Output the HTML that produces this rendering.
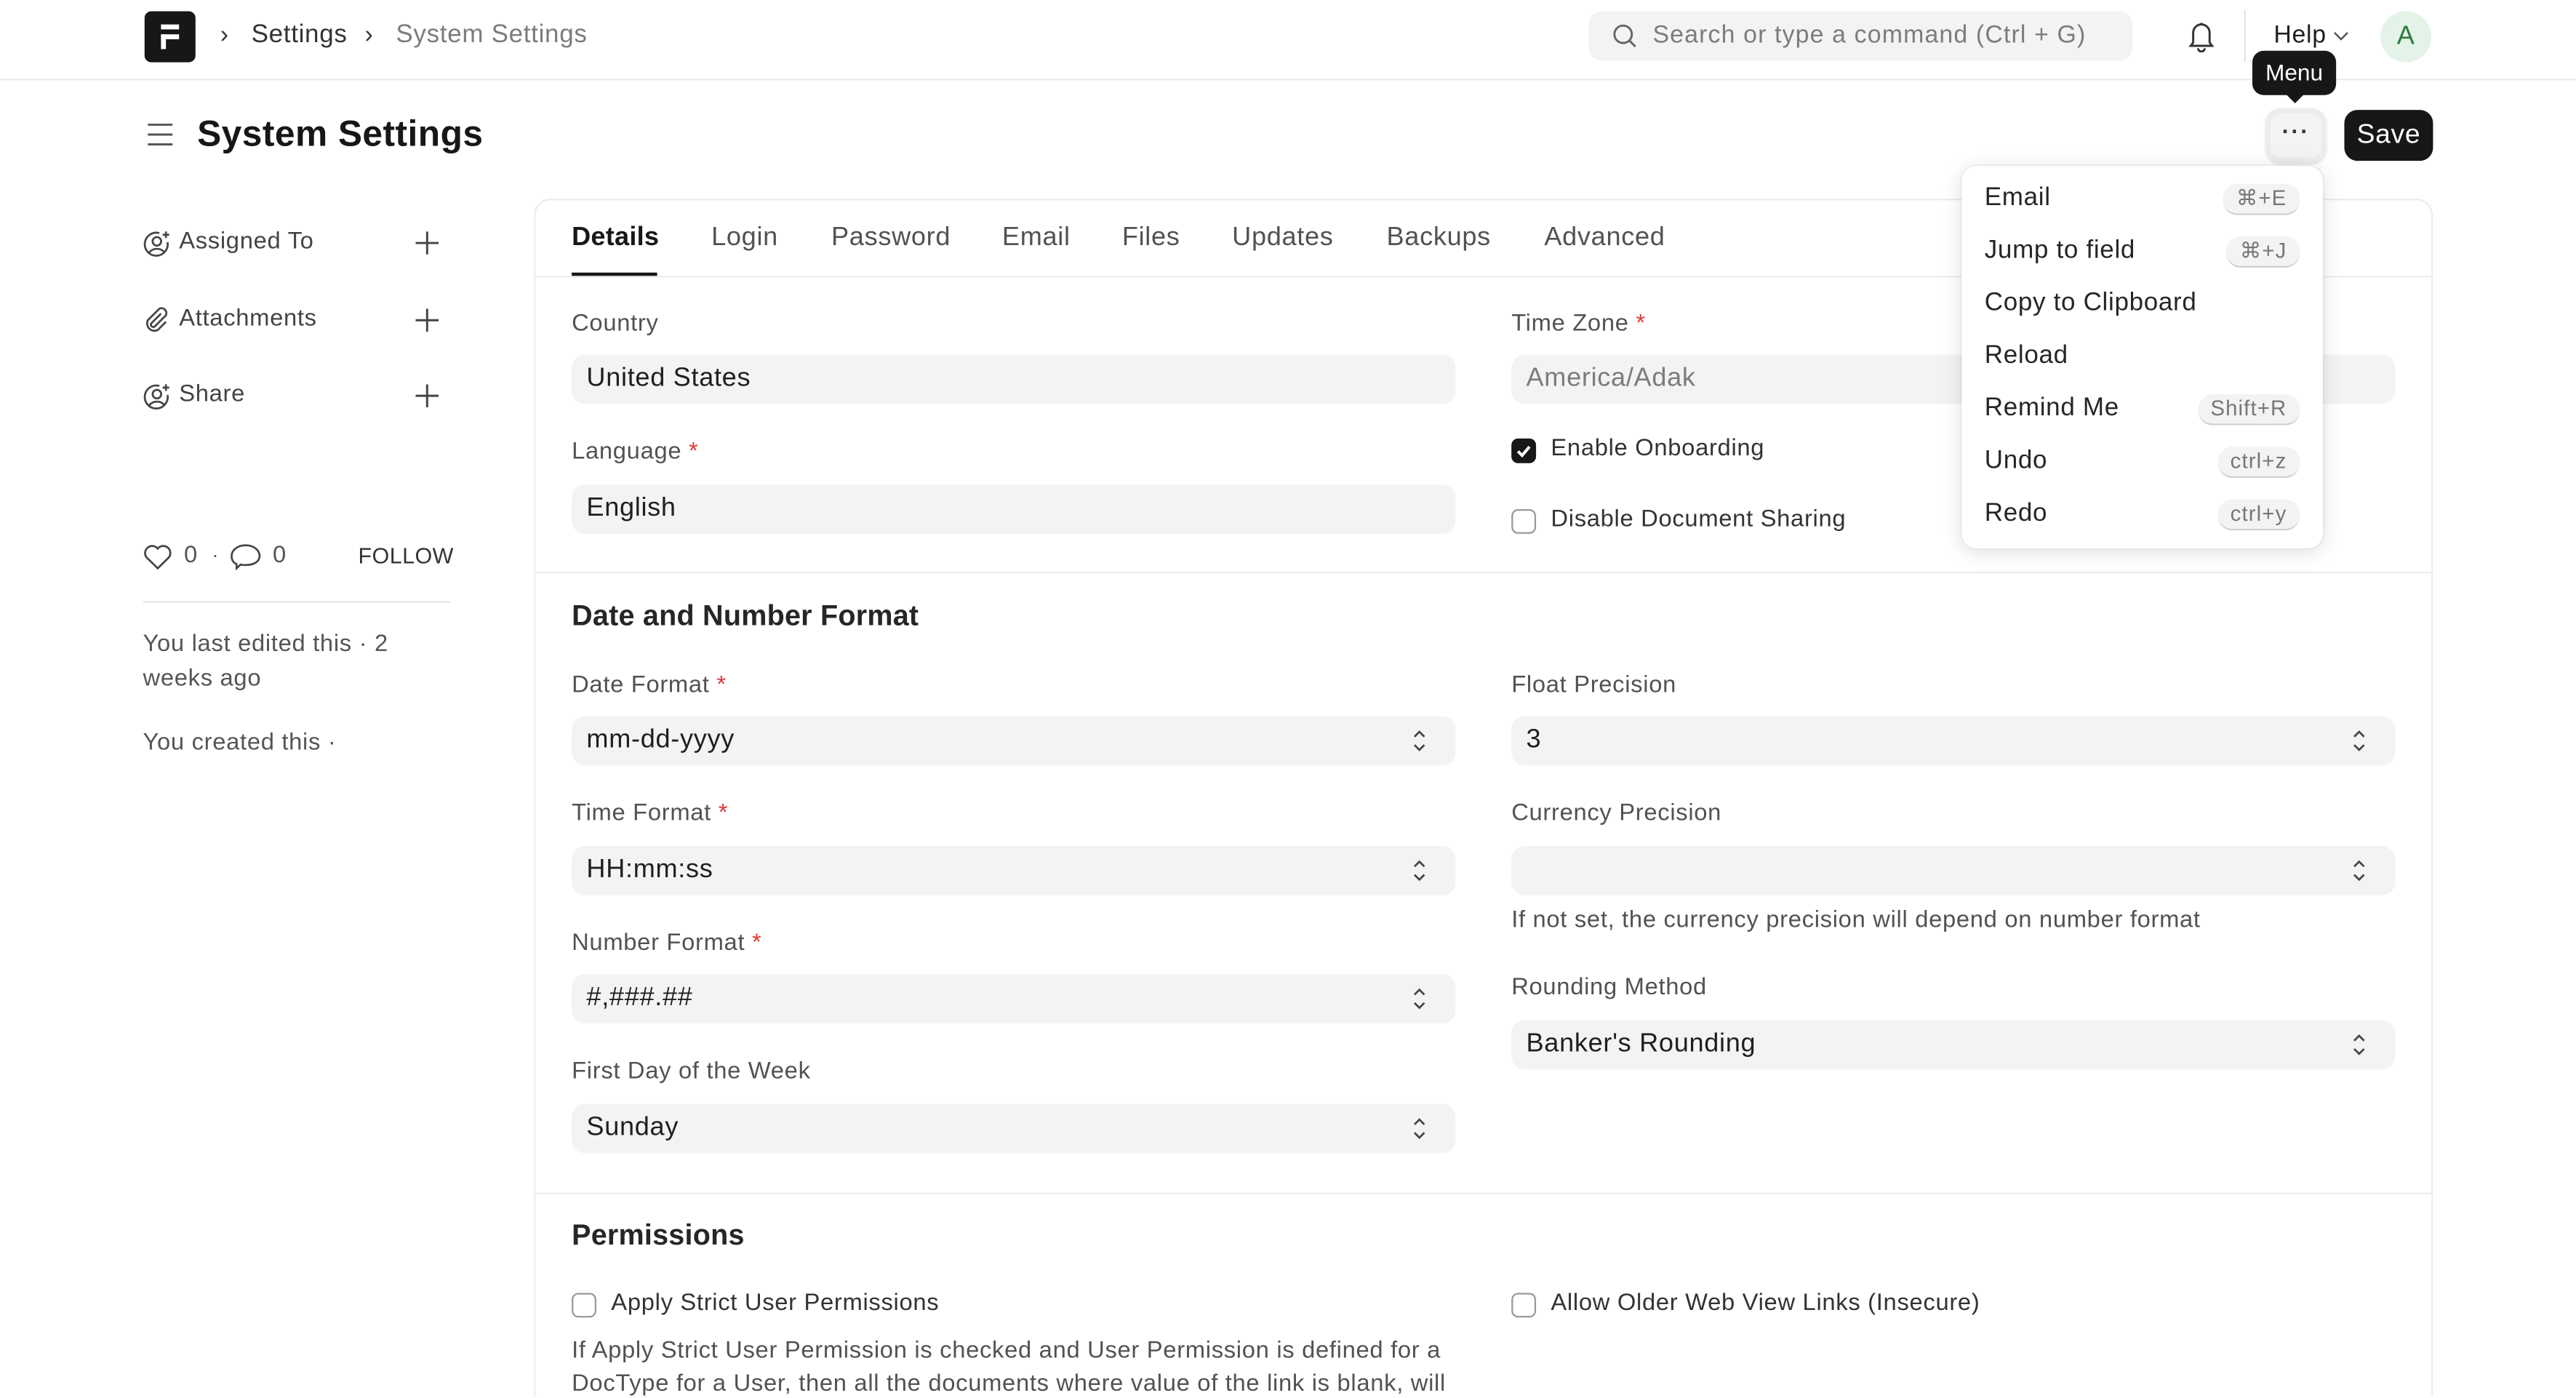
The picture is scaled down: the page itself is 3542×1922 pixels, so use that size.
<!DOCTYPE html>
<html><head><meta charset="utf-8">
<style>
*{box-sizing:border-box;margin:0;padding:0}
html,body{width:3542px;height:1922px;overflow:hidden;background:#fff;position:relative}
#w{position:absolute;left:0;top:2px;width:1568px;height:849px;overflow:hidden;transform:scale(2.2589);transform-origin:0 0;font-family:"Liberation Sans",sans-serif;color:#1f1f1f;letter-spacing:0.3px}
.t{position:absolute;white-space:nowrap;transform:translateY(-50%);line-height:1.2}
.a{position:absolute}
.lab{font-size:14.5px;color:#525252}
.req{color:#e03636}
.inp{position:absolute;height:30px;background:#f3f3f3;border-radius:8px;font-size:16px;color:#1f1f1f;padding-left:9px;line-height:30px}
.arr{position:absolute;right:18px;top:8px}
.cb{position:absolute;width:15px;height:15px;border:1.3px solid #999;border-radius:4px;background:#fff}
.cbl{font-size:14.5px;color:#333}
.kbd{position:absolute;right:14px;height:19px;border-radius:9px;background:#f3f3f3;border-bottom:1.5px solid #cfcfcf;font-size:13px;color:#777;line-height:18px;padding:0 8px;letter-spacing:0.5px}
.mi{position:absolute;left:14px;font-size:15.5px;color:#262626;transform:translateY(-50%)}
</style></head><body><div id="w">
<div class="a" style="left:0;top:47px;width:1568px;height:1px;background:#ebebeb"></div>
<div class="a" style="left:88px;top:6px;width:31px;height:31px;background:#171717;border-radius:4px">
 <div class="a" style="left:10px;top:8px;width:11px;height:3px;background:#fff"></div>
 <div class="a" style="left:10px;top:14px;width:11px;height:3px;background:#fff"></div>
 <div class="a" style="left:10px;top:14px;width:3px;height:9px;background:#fff"></div>
</div>
<div class="t" style="left:134px;top:21px;font-size:15px;color:#333">›</div>
<div class="t" style="left:153px;top:21px;font-size:15.5px;color:#333">Settings</div>
<div class="t" style="left:222px;top:21px;font-size:15px;color:#333">›</div>
<div class="t" style="left:241px;top:21px;font-size:15.5px;color:#7c7c7c">System Settings</div>
<div class="a" style="left:967px;top:6px;width:331px;height:30px;background:#f3f3f3;border-radius:8px"></div>
<svg class="a" style="left:981px;top:13px" width="16" height="16" viewBox="0 0 16 16" fill="none" stroke="#666" stroke-width="1.3"><circle cx="7" cy="7" r="5.3"/><path d="M11 11l3.5 3.5"/></svg>
<div class="t" style="left:1006px;top:21px;font-size:15px;color:#7c7c7c;letter-spacing:0.5px">Search or type a command (Ctrl + G)</div>
<svg class="a" style="left:1331px;top:11px" width="18" height="20" viewBox="0 0 18 20" fill="none" stroke="#333" stroke-width="1.3"><path d="M4 14V8a5 5 0 0110 0v6l1.5 2h-13z"/><path d="M7 17.5a2 2 0 004 0"/><path d="M9 2v1"/></svg>
<div class="a" style="left:1366px;top:5px;width:1px;height:32px;background:#e5e5e5"></div>
<div class="t" style="left:1384px;top:21px;font-size:15px;color:#1f1f1f">Help</div>
<svg class="a" style="left:1420px;top:17px" width="10" height="8" viewBox="0 0 10 8" fill="none" stroke="#555" stroke-width="1.1"><path d="M1 2l4 4 4-4"/></svg>
<div class="a" style="left:1449px;top:6px;width:31px;height:31px;border-radius:50%;background:#e3f3e7;color:#2d7a3e;font-size:16px;text-align:center;line-height:31px">A</div>
<svg class="a" style="left:89px;top:73px" width="17" height="16" viewBox="0 0 17 16" stroke="#555" stroke-width="1.3"><path d="M1 2h15M1 8h15M1 14h15"/></svg>
<div class="t" style="left:120px;top:81px;font-size:22px;font-weight:bold;color:#171717;letter-spacing:0.2px">System Settings</div>
<div class="a" style="left:1371px;top:30px;width:51px;height:27px;background:#171717;border-radius:7px;color:#fff;font-size:14px;text-align:center;line-height:27px;letter-spacing:0">Menu</div>
<div class="a" style="left:1391px;top:56px;width:0;height:0;border-left:6px solid transparent;border-right:6px solid transparent;border-top:6px solid #171717"></div>
<div class="a" style="left:1379px;top:65px;width:37px;height:33px;background:#f3f3f3;border-radius:9px;border:3px solid #ececec;box-shadow:0 1px 2px rgba(0,0,0,.12)"></div>
<div class="t" style="left:1389px;top:79px;font-size:14px;font-weight:bold;color:#333;letter-spacing:1px">···</div>
<div class="a" style="left:1427px;top:66px;width:54px;height:31px;background:#171717;border-radius:8px;color:#fff;font-size:16.5px;text-align:center;line-height:31px">Save</div>
<svg class="a" style="left:87px;top:139px" width="17" height="17" viewBox="0 0 17 17" fill="none" stroke="#444" stroke-width="1.2"><path d="M15 7.5A7 7 0 1110 2"/><circle cx="8.5" cy="7" r="2.6"/><path d="M3.8 13.8c2.5-3 7-3 9.4 0"/><path d="M14 1v4M12 3h4"/></svg>
<div class="t" style="left:109px;top:147px;font-size:14.5px;color:#444">Assigned To</div>
<svg class="a" style="left:87px;top:185px" width="17" height="17" viewBox="0 0 17 17" fill="none" stroke="#444" stroke-width="1.2"><path d="M11 5l-6 6a1.5 1.5 0 002 2l7-7a3 3 0 00-4-4L3 9a4.5 4.5 0 006 6l5-5"/></svg>
<div class="t" style="left:109px;top:194px;font-size:14.5px;color:#444">Attachments</div>
<svg class="a" style="left:87px;top:232px" width="17" height="17" viewBox="0 0 17 17" fill="none" stroke="#444" stroke-width="1.2"><path d="M15 7.5A7 7 0 1110 2"/><circle cx="8.5" cy="7" r="2.6"/><path d="M3.8 13.8c2.5-3 7-3 9.4 0"/><path d="M14 1v4M12 3h4"/></svg>
<div class="t" style="left:109px;top:240px;font-size:14.5px;color:#444">Share</div>
<svg class="a" style="left:253px;top:140px" width="14" height="14" stroke="#444" stroke-width="1.3"><path d="M7 0v14M0 7h14"/></svg>
<svg class="a" style="left:253px;top:187px" width="14" height="14" stroke="#444" stroke-width="1.3"><path d="M7 0v14M0 7h14"/></svg>
<svg class="a" style="left:253px;top:233px" width="14" height="14" stroke="#444" stroke-width="1.3"><path d="M7 0v14M0 7h14"/></svg>
<svg class="a" style="left:87px;top:330px" width="18" height="16" viewBox="0 0 18 16" fill="none" stroke="#444" stroke-width="1.2"><path d="M9 15L2.3 8.5A4 4 0 019 3a4 4 0 016.7 5.5z"/></svg>
<div class="t" style="left:112px;top:338px;font-size:14.5px;color:#555">0</div>
<div class="t" style="left:129px;top:337px;font-size:12px;color:#555">·</div>
<svg class="a" style="left:140px;top:329px" width="19" height="17" viewBox="0 0 19 17" fill="none" stroke="#444" stroke-width="1.2"><path d="M4 13.5C1.5 12.3 1 10.5 1 8.5 1 5 4.5 2 9.5 2S18 5 18 8.5 14.5 14 9.5 14c-1 0-2 0-3-.3L4 16z"/></svg>
<div class="t" style="left:166px;top:338px;font-size:14.5px;color:#555">0</div>
<div class="t" style="left:218px;top:338px;font-size:13.5px;color:#333;letter-spacing:0.2px">FOLLOW</div>
<div class="a" style="left:87px;top:365px;width:187px;height:1px;background:#e5e5e5"></div>
<div class="t" style="left:87px;top:392px;font-size:14.5px;color:#555">You last edited this · 2</div>
<div class="t" style="left:87px;top:413px;font-size:14.5px;color:#555">weeks ago</div>
<div class="t" style="left:87px;top:452px;font-size:14.5px;color:#555">You created this ·</div>
<div class="a" style="left:325px;top:120px;width:1156px;height:729px;border:1px solid #ececec;border-bottom:none;border-radius:10px 10px 0 0"></div>
<div class="a" style="left:326px;top:167px;width:1154px;height:1px;background:#ececec"></div>
<div class="t" style="left:348px;top:144px;font-size:16px;color:#171717;font-weight:bold;letter-spacing:0.1px">Details</div>
<div class="a" style="left:348px;top:165px;width:52px;height:2px;background:#171717"></div>
<div class="t" style="left:433px;top:144px;font-size:16px;color:#525252">Login</div>
<div class="t" style="left:506px;top:144px;font-size:16px;color:#525252">Password</div>
<div class="t" style="left:610px;top:144px;font-size:16px;color:#525252">Email</div>
<div class="t" style="left:683px;top:144px;font-size:16px;color:#525252">Files</div>
<div class="t" style="left:750px;top:144px;font-size:16px;color:#525252">Updates</div>
<div class="t" style="left:844px;top:144px;font-size:16px;color:#525252">Backups</div>
<div class="t" style="left:940px;top:144px;font-size:16px;color:#525252">Advanced</div>
<div class="t lab" style="left:348px;top:197px">Country</div>
<div class="inp" style="left:348px;top:215px;width:538px">United States</div>
<div class="t lab" style="left:348px;top:275px">Language <span class="req">*</span></div>
<div class="inp" style="left:348px;top:294px;width:538px">English</div>
<div class="t lab" style="left:920px;top:197px">Time Zone <span class="req">*</span></div>
<div class="inp" style="left:920px;top:215px;width:538px;color:#7c7c7c">America/Adak</div>
<div class="a" style="left:920px;top:266px;width:15px;height:15px;background:#171717;border-radius:4px"></div>
<svg class="a" style="left:922px;top:268px" width="11" height="11" fill="none" stroke="#fff" stroke-width="1.8"><path d="M2 5.8l2.5 2.5L9 3"/></svg>
<div class="t cbl" style="left:944px;top:273px">Enable Onboarding</div>
<div class="cb" style="left:920px;top:309px"></div>
<div class="t cbl" style="left:944px;top:316px">Disable Document Sharing</div>
<div class="a" style="left:326px;top:347px;width:1154px;height:1px;background:#ececec"></div>
<div class="t" style="left:348px;top:374px;font-size:17.5px;font-weight:bold;color:#262626;letter-spacing:0.1px">Date and Number Format</div>
<div class="t lab" style="left:348px;top:417px">Date Format <span class="req">*</span></div>
<div class="inp" style="left:348px;top:435px;width:538px">mm-dd-yyyy<svg class="arr" width="8" height="14" fill="none" stroke="#444" stroke-width="1.2"><path d="M1 4.5l3-3 3 3M1 9.5l3 3 3-3"/></svg></div>
<div class="t lab" style="left:348px;top:495px">Time Format <span class="req">*</span></div>
<div class="inp" style="left:348px;top:514px;width:538px">HH:mm:ss<svg class="arr" width="8" height="14" fill="none" stroke="#444" stroke-width="1.2"><path d="M1 4.5l3-3 3 3M1 9.5l3 3 3-3"/></svg></div>
<div class="t lab" style="left:348px;top:574px">Number Format <span class="req">*</span></div>
<div class="inp" style="left:348px;top:592px;width:538px">#,###.##<svg class="arr" width="8" height="14" fill="none" stroke="#444" stroke-width="1.2"><path d="M1 4.5l3-3 3 3M1 9.5l3 3 3-3"/></svg></div>
<div class="t lab" style="left:348px;top:652px">First Day of the Week</div>
<div class="inp" style="left:348px;top:671px;width:538px">Sunday<svg class="arr" width="8" height="14" fill="none" stroke="#444" stroke-width="1.2"><path d="M1 4.5l3-3 3 3M1 9.5l3 3 3-3"/></svg></div>
<div class="t lab" style="left:920px;top:417px">Float Precision</div>
<div class="inp" style="left:920px;top:435px;width:538px">3<svg class="arr" width="8" height="14" fill="none" stroke="#444" stroke-width="1.2"><path d="M1 4.5l3-3 3 3M1 9.5l3 3 3-3"/></svg></div>
<div class="t lab" style="left:920px;top:495px">Currency Precision</div>
<div class="inp" style="left:920px;top:514px;width:538px"><svg class="arr" width="8" height="14" fill="none" stroke="#444" stroke-width="1.2"><path d="M1 4.5l3-3 3 3M1 9.5l3 3 3-3"/></svg></div>
<div class="t lab" style="left:920px;top:560px">If not set, the currency precision will depend on number format</div>
<div class="t lab" style="left:920px;top:601px">Rounding Method</div>
<div class="inp" style="left:920px;top:620px;width:538px">Banker's Rounding<svg class="arr" width="8" height="14" fill="none" stroke="#444" stroke-width="1.2"><path d="M1 4.5l3-3 3 3M1 9.5l3 3 3-3"/></svg></div>
<div class="a" style="left:326px;top:725px;width:1154px;height:1px;background:#ececec"></div>
<div class="t" style="left:348px;top:751px;font-size:17.5px;font-weight:bold;color:#262626;letter-spacing:0.1px">Permissions</div>
<div class="cb" style="left:348px;top:786px"></div>
<div class="t cbl" style="left:372px;top:793px">Apply Strict User Permissions</div>
<div class="cb" style="left:920px;top:786px"></div>
<div class="t cbl" style="left:944px;top:793px">Allow Older Web View Links (Insecure)</div>
<div class="t lab" style="left:348px;top:822px">If Apply Strict User Permission is checked and User Permission is defined for a</div>
<div class="t lab" style="left:348px;top:842px;line-height:13px">DocType for a User, then all the documents where value of the link is blank, will</div>
<div class="a" style="left:1194px;top:100px;width:220px;height:233px;background:#fff;border-radius:9px;box-shadow:0 2px 12px rgba(0,0,0,.13),0 0 1px rgba(0,0,0,.15)">
 <div class="mi" style="top:20px">Email</div><div class="kbd" style="top:11px">⌘+E</div>
 <div class="mi" style="top:52px">Jump to field</div><div class="kbd" style="top:43px">⌘+J</div>
 <div class="mi" style="top:84px">Copy to Clipboard</div>
 <div class="mi" style="top:116px">Reload</div>
 <div class="mi" style="top:148px">Remind Me</div><div class="kbd" style="top:139px">Shift+R</div>
 <div class="mi" style="top:180px">Undo</div><div class="kbd" style="top:171px">ctrl+z</div>
 <div class="mi" style="top:212px">Redo</div><div class="kbd" style="top:203px">ctrl+y</div>
</div>
</div></body></html>
